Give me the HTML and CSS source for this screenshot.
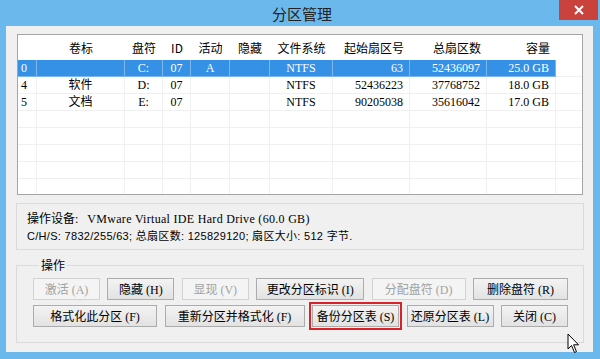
FILE: index.html
```html
<!DOCTYPE html>
<html lang="zh-CN">
<head>
    <meta charset="UTF-8">
    <meta name="viewport" content="width=device-width, initial-scale=1.0">
    <title>分区管理</title>
    <link rel="stylesheet" href="styles.css">
</head>
<body>
    <div class="window">
        <!-- Title bar -->
        <div class="titlebar">
            <span></span>
            <h1 class="title">分区管理</h1>
            <button class="close" aria-label="关闭">
                <svg width="10" height="10" viewBox="0 0 10 10"><path d="M1 1L9 9M9 1L1 9" stroke="#fff" stroke-width="2"/></svg>
            </button>
        </div>

        <div class="client">
            <!-- Partition list -->
            <div class="list">
                <table class="parts">
                    <colgroup>
                        <col class="c-idx"><col class="c-label"><col class="c-drive"><col class="c-id">
                        <col class="c-act"><col class="c-hid"><col class="c-fs"><col class="c-start">
                        <col class="c-total"><col class="c-size"><col>
                    </colgroup>
                    <thead>
                        <tr>
                            <th></th><th>卷标</th><th>盘符</th><th>ID</th><th>活动</th><th>隐藏</th>
                            <th>文件系统</th><th class="num">起始扇区号</th><th class="num">总扇区数</th><th class="num">容量</th><th class="fill"></th>
                        </tr>
                    </thead>
                    <tbody>
                        <tr class="sel">
                            <td class="idx">0</td><td></td><td>C:</td><td>07</td><td>A</td><td></td>
                            <td>NTFS</td><td class="num">63</td><td class="num">52436097</td><td class="num">25.0 GB</td><td class="fill"></td>
                        </tr>
                        <tr>
                            <td class="idx">4</td><td>软件</td><td>D:</td><td>07</td><td></td><td></td>
                            <td>NTFS</td><td class="num">52436223</td><td class="num">37768752</td><td class="num">18.0 GB</td><td class="fill"></td>
                        </tr>
                        <tr>
                            <td class="idx">5</td><td>文档</td><td>E:</td><td>07</td><td></td><td></td>
                            <td>NTFS</td><td class="num">90205038</td><td class="num">35616042</td><td class="num">17.0 GB</td><td class="fill"></td>
                        </tr>
                        <tr><td></td><td></td><td></td><td></td><td></td><td></td><td></td><td></td><td></td><td></td><td class="fill"></td></tr>
                        <tr><td></td><td></td><td></td><td></td><td></td><td></td><td></td><td></td><td></td><td></td><td class="fill"></td></tr>
                        <tr><td></td><td></td><td></td><td></td><td></td><td></td><td></td><td></td><td></td><td></td><td class="fill"></td></tr>
                        <tr><td></td><td></td><td></td><td></td><td></td><td></td><td></td><td></td><td></td><td></td><td class="fill"></td></tr>
                        <tr><td></td><td></td><td></td><td></td><td></td><td></td><td></td><td></td><td></td><td></td><td class="fill"></td></tr>
                    </tbody>
                </table>
            </div>

            <!-- Device info -->
            <div class="info">
                <p class="dev">操作设备:&nbsp;&nbsp; <span class="dev-name">VMware Virtual IDE Hard Drive (60.0 GB)</span></p>
                <p class="chs">C/H/S: 7832/255/63; 总扇区数: 125829120; 扇区大小: 512 字节.</p>
            </div>

            <!-- Actions -->
            <fieldset class="ops">
                <legend>操作</legend>
                <div class="btn-row">
                    <button class="btn w-s" disabled>激活<span class="key">(A)</span></button>
                    <button class="btn w-s">隐藏<span class="key">(H)</span></button>
                    <button class="btn w-s" disabled>显现<span class="key">(V)</span></button>
                    <button class="btn w-l">更改分区标识<span class="key">(I)</span></button>
                    <button class="btn w-m" disabled>分配盘符<span class="key">(D)</span></button>
                    <button class="btn w-m2">删除盘符<span class="key">(R)</span></button>
                </div>
                <div class="btn-row">
                    <button class="btn w-fmt">格式化此分区<span class="key">(F)</span></button>
                    <button class="btn w-refmt">重新分区并格式化<span class="key">(F)</span></button>
                    <button class="btn w-tbl marked">备份分区表<span class="key">(S)</span></button>
                    <button class="btn w-tbl">还原分区表<span class="key">(L)</span></button>
                    <button class="btn w-s">关闭<span class="key">(C)</span></button>
                </div>
            </fieldset>

            <svg class="cursor" width="14" height="21" viewBox="0 0 14 21">
                <path d="M1 1 L1 16 L4.5 12.5 L7.5 19.5 L9.5 18.6 L6.6 11.8 L11.5 11.8 Z" fill="#fff" stroke="#000" stroke-width="1" stroke-linejoin="round"/>
            </svg>
        </div>
    </div>
</body>
</html>
```

FILE: styles.css
```css
body {
    margin: 0;
    width: 600px;
    height: 359px;
    overflow: hidden;
    font-family: "Liberation Serif", "Noto Sans CJK SC", serif;
    font-size: 12px;
    color: #000;
}
.window {
    height: 359px;
    box-sizing: border-box;
    padding: 0 7px 7px 6px;
    background-color: #6ab8ec;
}
.titlebar {
    height: 26px;
    display: grid;
    grid-template-columns: 1fr auto 1fr;
    align-items: center;
    margin-right: -5px;
}
.title {
    margin: 0;
    font-family: "Noto Sans CJK SC", sans-serif;
    font-size: 15px;
    font-weight: normal;
    color: #222;
}
.close {
    justify-self: end;
    align-self: start;
    width: 39px;
    height: 20px;
    padding: 0;
    border: none;
    background-color: #c9433c;
    display: flex;
    align-items: center;
    justify-content: center;
}
.client {
    position: relative;
    height: 326px;
    box-sizing: border-box;
    padding: 8px 10px 0 11px;
    background-color: #f0f0f0;
}

/* partition list */
.list {
    height: 161px;
    box-sizing: border-box;
    border: 1px solid #a5a5a5;
    background: #fff;
    overflow: hidden;
}
.parts {
    width: 100%;
    table-layout: fixed;
    border-collapse: separate;
    border-spacing: 0;
}
.c-idx { width: 19px; }
.c-label { width: 88px; }
.c-drive { width: 38px; }
.c-id { width: 28px; }
.c-act { width: 39px; }
.c-hid { width: 40px; }
.c-fs { width: 63px; }
.c-start { width: 77px; }
.c-total { width: 77px; }
.c-size { width: 69px; }
.parts th {
    height: 25px;
    padding: 0;
    font-weight: normal;
    font-family: "Noto Sans CJK SC", sans-serif;
    text-align: center;
    white-space: nowrap;
}
.parts td {
    height: 16px;
    padding: 0;
    line-height: 16px;
    text-align: center;
    border-right: 1px solid #f0f0f0;
    border-bottom: 1px solid #f0f0f0;
    white-space: nowrap;
}
.parts .num {
    text-align: right;
    padding-right: 6px;
}
.parts .idx {
    text-align: left;
    padding-left: 3px;
}
.parts .fill {
    border-right: none;
}
.parts .sel td {
    background-color: #3591e6;
    color: #fff;
    border-right-color: #7db6ec;
    border-bottom-color: #7db6ec;
}
.parts .sel td.fill {
    background-color: #fff;
    border-bottom-color: #f0f0f0;
}

/* device info */
.info {
    margin: 8px -1px 0;
    height: 47px;
    box-sizing: border-box;
    padding: 7px 10px 0;
    border: 1px solid #dadada;
}
.info p {
    margin: 0;
    line-height: 17px;
    white-space: nowrap;
}
.dev-name {
    letter-spacing: 0.3px;
}
.chs {
    font-family: "Liberation Sans", "Noto Sans CJK SC", sans-serif;
    font-size: 11px;
    letter-spacing: 0.3px;
}

/* actions */
.ops {
    margin: 7px -1px 0;
    height: 86px;
    box-sizing: border-box;
    padding: 5px 15px 0 16px;
    border: 1px solid #dadada;
    display: flex;
    flex-direction: column;
    gap: 5px;
}
.ops legend {
    margin-left: 6px;
    padding: 0 2px;
    line-height: 16px;
    font-family: "Noto Sans CJK SC", sans-serif;
}
.btn-row {
    display: flex;
    justify-content: space-between;
}
.btn {
    height: 22px;
    padding: 0;
    border: 1px solid #acacac;
    background: linear-gradient(#f3f3f3, #e2e2e2);
    font-family: "Liberation Serif", "Noto Sans CJK SC", serif;
    font-size: 12px;
    color: #000;
}
.btn:disabled {
    border-color: #d2d2d2;
    background: #f4f4f4;
    color: #a2a2a2;
}
.key {
    margin-left: 3px;
}
.w-s { width: 67px; }
.w-l { width: 108px; }
.w-m { width: 94px; }
.w-m2 { width: 95px; }
.w-fmt { width: 124px; }
.w-refmt { width: 140px; }
.w-tbl { width: 87px; }
.marked {
    outline: 2px solid #d8232a;
    outline-offset: 1px;
}
.cursor {
    position: absolute;
    left: 561px;
    top: 307px;
}
```
